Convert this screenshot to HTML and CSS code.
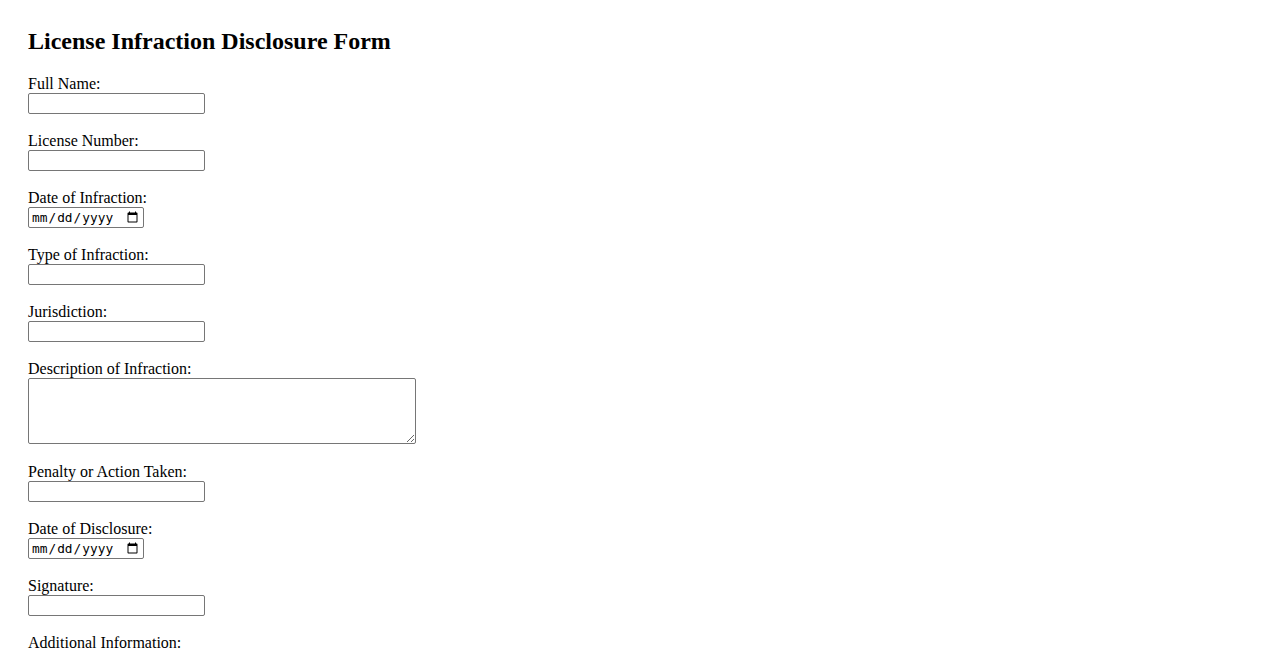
FILE: index.html
```html
<!DOCTYPE html>
<html lang="en">
<head>
<meta charset="utf-8">
<title>License Infraction Disclosure Form</title>
<link rel="stylesheet" href="styles.css">
</head>
<body>
<h2 class="title">License Infraction Disclosure Form</h2>
<form class="form">
  <label for="fullName">Full Name:</label><br>
  <input class="text" type="text" id="fullName" name="fullName"><br><br>

  <label for="licenseNumber">License Number:</label><br>
  <input class="text" type="text" id="licenseNumber" name="licenseNumber"><br><br>

  <label for="infractionDate">Date of Infraction:</label><br>
  <input class="date" type="date" id="infractionDate" name="infractionDate"><br><br>

  <label for="infractionType">Type of Infraction:</label><br>
  <input class="text" type="text" id="infractionType" name="infractionType"><br><br>

  <label for="jurisdiction">Jurisdiction:</label><br>
  <input class="text" type="text" id="jurisdiction" name="jurisdiction"><br><br>

  <label for="description">Description of Infraction:</label><br>
  <textarea class="area" id="description" name="description"></textarea><br><br>

  <label for="penalty">Penalty or Action Taken:</label><br>
  <input class="text" type="text" id="penalty" name="penalty"><br><br>

  <label for="disclosureDate">Date of Disclosure:</label><br>
  <input class="date" type="date" id="disclosureDate" name="disclosureDate"><br><br>

  <label for="signature">Signature:</label><br>
  <input class="text" type="text" id="signature" name="signature"><br><br>

  <label for="additional">Additional Information:</label><br>
  <textarea class="area" id="additional" name="additional"></textarea><br><br>

  <input class="submit" type="submit" value="Submit">
</form>
</body>
</html>
```

FILE: styles.css
```css
html, body {
  background: #fff;
}
body {
  margin: 0;
  padding: 28px;
  font-family: "Liberation Serif", "Times New Roman", serif;
  font-size: 16px;
  color: #000;
}
.title {
  margin: 0 0 19.92px 0;
  font-size: 24px;
  font-weight: bold;
}
.text, .date, .area {
  box-sizing: border-box;
  margin: 0;
  border: 1px solid #767676;
  border-radius: 2px;
  background: #fff;
  vertical-align: baseline;
}
.text {
  width: 177px;
  height: 21px;
  padding: 1px 2px;
  font-family: "Liberation Sans", Arial, sans-serif;
  font-size: 13.33px;
}
.date {
  width: 116px;
  height: 21px;
  padding: 1px 2px;
  font-family: "DejaVu Sans Mono", "Liberation Mono", monospace;
  font-size: 12.8px;
  color: #000;
}
.area {
  width: 388px;
  height: 66px;
  padding: 2px;
  margin-bottom: -0.3px;
  font-family: "Liberation Mono", monospace;
  font-size: 13.33px;
  vertical-align: text-bottom;
}
.submit {
  font-family: "Liberation Sans", Arial, sans-serif;
  font-size: 13.33px;
}
```
